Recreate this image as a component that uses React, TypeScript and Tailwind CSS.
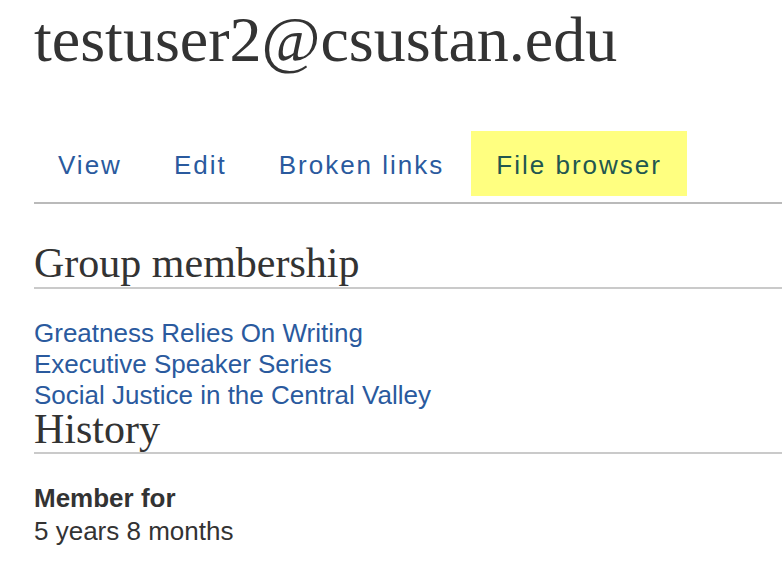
import React from 'react';

const tabs = [
  { label: 'View', active: false },
  { label: 'Edit', active: false },
  { label: 'Broken links', active: false },
  { label: 'File browser', active: true },
];

const groups = [
  'Greatness Relies On Writing',
  'Executive Speaker Series',
  'Social Justice in the Central Valley',
];

const serif = "font-['Liberation_Serif','Times_New_Roman',serif]";

const App: React.FC = () => {
  return (
    <div className="min-h-[570px] bg-white pl-[34px] text-[#333] font-['Liberation_Sans',Arial,sans-serif] overflow-hidden">
      <h1 className={`${serif} pt-[8px] text-[64px] leading-[64px] font-normal whitespace-nowrap`}>
        testuser2@csustan.edu
      </h1>

      <nav className="mt-[59px] border-b-2 border-[#bababa] pb-[6px]">
        <ul className="flex -ml-[1px]">
          {tabs.map(tab => (
            <li key={tab.label} className="mr-[2px]">
              <a
                href="#"
                className={`block px-[25px] pt-[20px] pb-[16px] text-[26px] leading-[29px] tracking-[2px] ${
                  tab.active ? 'bg-[#ffff80] text-[#22574f]' : 'text-[#2a5a9e]'
                }`}
              >
                {tab.label}
              </a>
            </li>
          ))}
        </ul>
      </nav>

      <h2 className={`${serif} mt-[38px] text-[42px] leading-[42px] font-normal pb-[3px] border-b-2 border-[#cacaca]`}>
        Group membership
      </h2>

      <ul className="mt-[29px]">
        {groups.map(group => (
          <li key={group}>
            <a href="#" className="text-[26px] leading-[30px] text-[#2a5a9e]">
              {group}
            </a>
          </li>
        ))}
      </ul>

      <h2 className={`${serif} -mt-[3px] text-[42px] leading-[42px] font-normal pb-[2px] border-b-2 border-[#cacaca]`}>
        History
      </h2>

      <dl className="mt-[28px] text-[26px] leading-[33px]">
        <dt className="font-bold">Member for</dt>
        <dd>5 years 8 months</dd>
      </dl>
    </div>
  );
};

export default App;
